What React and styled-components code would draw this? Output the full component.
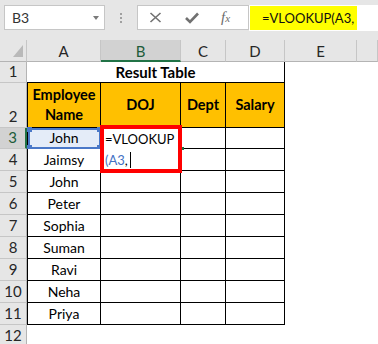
import React from "react"
import styled, { createGlobalStyle } from "styled-components"

const GlobalStyle = createGlobalStyle`
  html, body { margin: 0; padding: 0; background: #fff; }
  body { font-family: Lato, "Liberation Sans", sans-serif; overflow: hidden; }
  * { box-sizing: border-box; }
`

const Page = styled.div`
  width: 378px;
  height: 344px;
  overflow: hidden;
  background: #fff;
`

const Toolbar = styled.div`
  display: flex;
  align-items: flex-start;
  height: 40px;
  padding-top: 5px;
  background: #e6e6e6;
`

const NameBox = styled.div`
  display: flex;
  align-items: center;
  width: 101px;
  height: 25px;
  margin-left: 4px;
  padding-left: 7px;
  background: #fff;
  border: 1px solid #c6c6c6;
  font-size: 14px;
  color: #333;
`

const Caret = styled.span`
  margin-left: auto;
  margin-right: 5px;
  width: 0;
  height: 0;
  border-left: 3.5px solid transparent;
  border-right: 3.5px solid transparent;
  border-top: 4px solid #7a7a7a;
`

const Grip = styled.div`
  display: flex;
  flex-direction: column;
  gap: 2px;
  margin: 8px 0 0 15px;

  span {
    width: 2px;
    height: 2px;
    background: #a0a0a0;
  }
`

const FxButtons = styled.div`
  display: flex;
  align-items: center;
  width: 112px;
  height: 25px;
  margin-left: 15px;
  padding-left: 11px;
  background: #fff;
  border: 1px solid #c6c6c6;
  color: #707070;
`

const Fx = styled.span`
  margin-left: 22px;
  font-family: "Liberation Serif", serif;
  font-style: italic;
  font-size: 15px;
  color: #6b6b6b;

  small {
    font-size: 11px;
  }
`

const FormulaInput = styled.div`
  flex: 1;
  height: 26px;
  padding: 1px 0 1px 1px;
  background: #fff;
`

const Highlight = styled.div`
  display: flex;
  align-items: center;
  width: 107px;
  height: 100%;
  padding-left: 12px;
  background: #ffff00;
  font-size: 13px;
  color: #111;
`

const Sheet = styled.div`
  position: relative;
  display: grid;
  grid-template-columns: 27px 74px 80px 45px 59px 72px 1fr;
  grid-template-rows: 22px 21px 45px 21px repeat(8, 22px) 22px;
  font-size: 14px;
`

const Corner = styled.div`
  display: flex;
  align-items: flex-end;
  justify-content: flex-end;
  padding: 0 3px 4px 0;
  background: #e6e6e6;
  border-right: 1px solid #c6c6c6;
  border-bottom: 1px solid #b4b4b4;

  span {
    width: 0;
    height: 0;
    border-left: 10px solid transparent;
    border-bottom: 12px solid #b9b9b9;
  }
`

const ColHead = styled.div`
  display: flex;
  align-items: center;
  justify-content: center;
  padding-top: 1px;
  font-size: 15px;
  background: ${p => (p.$active ? "#d2d2d2" : "#e6e6e6")};
  border-right: 1px solid #c6c6c6;
  border-bottom: ${p => (p.$active ? "2px solid #217346" : "1px solid #b4b4b4")};
  color: ${p => (p.$active ? "#1d5c3a" : "#262626")};
`

const RowHead = styled.div`
  display: flex;
  align-items: flex-end;
  justify-content: center;
  padding-bottom: 2px;
  font-size: 15px;
  background: ${p => (p.$active ? "#d2d2d2" : "#e6e6e6")};
  border-bottom: 1px solid #c6c6c6;
  border-right: ${p => (p.$active ? "2px solid #217346" : "1px solid #b4b4b4")};
  color: ${p => (p.$active ? "#1d5c3a" : "#262626")};
`

const Cell = styled.div`
  position: relative;
  display: flex;
  align-items: center;
  justify-content: center;
  text-align: center;
  line-height: 20px;
  grid-column: ${p => p.$span || "auto"};
  background: ${p => p.$bg || "#fff"};
  font-weight: ${p => (p.$bold ? 700 : 400)};
  font-size: ${p => p.$size || "14px"};
  color: #000;
  border-left: ${p => (p.$left ? "1px solid #000" : "none")};
  border-right: ${p => (p.$lined ? "1px solid #000" : "none")};
  border-bottom: ${p => (p.$lined ? "1px solid #000" : "none")};
`

const RefBox = styled.div`
  position: absolute;
  top: 0;
  left: 0;
  right: -1px;
  bottom: -1px;
  border: 2px solid #4a78c8;

  i {
    position: absolute;
    width: 5px;
    height: 5px;
    background: #4a78c8;
  }
  i:nth-child(1) { top: -3px; left: -3px; }
  i:nth-child(2) { top: -3px; right: -3px; }
  i:nth-child(3) { bottom: -3px; left: -3px; }
  i:nth-child(4) { bottom: -3px; right: -3px; }
`

const Editor = styled.div`
  position: absolute;
  left: 100px;
  top: 85px;
  width: 82px;
  height: 48px;
  padding-left: 1px;
  border: 4px solid #ff0000;
  background: #fff;
  font-size: 13px;
  line-height: 21px;
  color: #000;
  white-space: nowrap;
  z-index: 2;

  b {
    font-weight: 400;
    color: #4472c4;
  }
`

const TextCaret = styled.span`
  display: inline-block;
  width: 1px;
  height: 16px;
  margin-left: 2px;
  vertical-align: -3px;
  background: #000;
`

const FillMark = styled.span`
  position: absolute;
  left: 181px;
  top: 107px;
  width: 3px;
  height: 3px;
  background: #217346;
`

const names = ["John", "Jaimsy", "John", "Peter", "Sophia", "Suman", "Ravi", "Neha", "Priya"]
const letters = ["A", "B", "C", "D", "E", ""]
const orange = "#ffc000"

const App = () => {
  return (
    <Page>
      <GlobalStyle />
      <Toolbar>
        <NameBox>
          B3
          <Caret />
        </NameBox>
        <Grip>
          <span /><span /><span />
        </Grip>
        <FxButtons>
          <svg width="13" height="11" viewBox="0 0 13 11">
            <path d="M1.5 1 L11.5 10 M11.5 1 L1.5 10" stroke="#717171" strokeWidth="1.6" fill="none" />
          </svg>
          <svg width="14" height="12" viewBox="0 0 14 12" style={{ marginLeft: 23 }}>
            <path d="M1 6 L5 10 L13 1.5" stroke="#717171" strokeWidth="2.6" fill="none" />
          </svg>
          <Fx>f<small>x</small></Fx>
        </FxButtons>
        <FormulaInput>
          <Highlight>=VLOOKUP(A3,</Highlight>
        </FormulaInput>
      </Toolbar>

      <Sheet>
        <Corner><span /></Corner>
        {letters.map((l, i) => (
          <ColHead key={i} $active={l === "B"}>{l}</ColHead>
        ))}

        <RowHead>1</RowHead>
        <Cell $span="2 / 6" $lined $bold $size="15px">Result Table</Cell>
        <Cell />
        <Cell />

        <RowHead>2</RowHead>
        <Cell $bg={orange} $lined $left $bold $size="14.5px">Employee<br />Name</Cell>
        <Cell $bg={orange} $lined $bold $size="14.5px">DOJ</Cell>
        <Cell $bg={orange} $lined $bold $size="14.5px">Dept</Cell>
        <Cell $bg={orange} $lined $bold $size="14.5px">Salary</Cell>
        <Cell />
        <Cell />

        {names.map((name, i) => (
          <React.Fragment key={i}>
            <RowHead $active={i === 0}>{i + 3}</RowHead>
            <Cell $lined $left $bg={i === 0 ? "#e4ecf8" : undefined}>
              {name}
              {i === 0 && (
                <RefBox>
                  <i /><i /><i /><i />
                </RefBox>
              )}
            </Cell>
            <Cell $lined />
            <Cell $lined />
            <Cell $lined />
            <Cell />
            <Cell />
          </React.Fragment>
        ))}

        <RowHead>12</RowHead>
        <Cell />
        <Cell />
        <Cell />
        <Cell />
        <Cell />
        <Cell />

        <Editor>
          =VLOOKUP
          <br />
          <b>(A3</b>,<TextCaret />
        </Editor>
        <FillMark />
      </Sheet>
    </Page>
  )
}

export default App
